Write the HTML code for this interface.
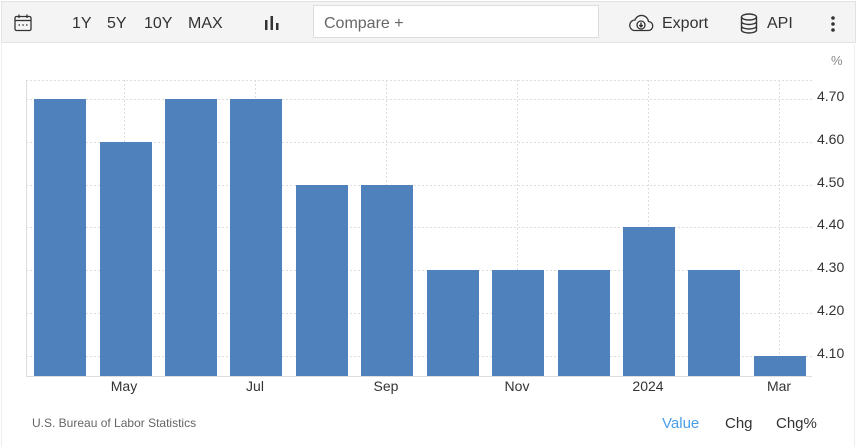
<!DOCTYPE html>
<html><head><meta charset="utf-8"><style>
body{margin:0;width:859px;height:447px;background:#fff;font-family:"Liberation Sans",Arial,sans-serif;position:relative;overflow:hidden}
.tb{position:absolute;left:1px;top:1px;width:853px;height:40px;background:#f4f4f4;border:1px solid #e2e2e2}
.t{position:absolute;font-size:16px;color:#333;top:15px}
.cmp{position:absolute;left:313px;top:5px;width:286px;height:33px;background:#fff;border:1px solid #ddd;box-sizing:border-box;font-size:16px;color:#666;padding:9px 10px}
.side{position:absolute;top:42px;width:1px;height:405px;background:#eee}
</style></head><body>
<div class="tb"></div>
<svg style="position:absolute;left:13px;top:13px" width="20" height="20" viewBox="0 0 20 20" fill="none" stroke="#333" stroke-width="1.3"><rect x="2" y="3.5" width="16" height="14" rx="1.5"/><line x1="2" y1="7.5" x2="18" y2="7.5"/><line x1="6" y1="1.5" x2="6" y2="5"/><line x1="14" y1="1.5" x2="14" y2="5"/><line x1="5.5" y1="12" x2="7" y2="12"/><line x1="9.3" y1="12" x2="10.8" y2="12"/><line x1="13" y1="12" x2="14.5" y2="12"/></svg>
<div class="t" style="left:72px">1Y</div><div class="t" style="left:107px">5Y</div><div class="t" style="left:144px">10Y</div><div class="t" style="left:188px">MAX</div>
<svg style="position:absolute;left:264px;top:15px" width="16" height="16"><rect x="1" y="5" width="2.5" height="10" fill="#333"/><rect x="6.5" y="1" width="2.5" height="14" fill="#333"/><rect x="12" y="8" width="2.5" height="7" fill="#333"/></svg>
<div class="cmp">Compare +</div>
<svg style="position:absolute;left:628px;top:14px" width="26" height="18" viewBox="0 0 26 18" fill="none" stroke="#333" stroke-width="1.3"><path d="M6 16.5H20a4.5 4.5 0 0 0 .5-9A7 7 0 0 0 7 6a5.3 5.3 0 0 0-1 10.5z"/><circle cx="13" cy="11" r="4" fill="#fff"/><path d="M13 8.5v4M11.2 11l1.8 1.8 1.8-1.8" stroke-width="1.5"/></svg>
<div class="t" style="left:662px">Export</div>
<svg style="position:absolute;left:740px;top:13px" width="18" height="21" viewBox="0 0 18 21" fill="none" stroke="#333" stroke-width="1.4"><ellipse cx="9" cy="4" rx="7.5" ry="3"/><path d="M1.5 4v13c0 1.7 3.4 3 7.5 3s7.5-1.3 7.5-3V4M1.5 8.5c0 1.7 3.4 3 7.5 3s7.5-1.3 7.5-3M1.5 13c0 1.7 3.4 3 7.5 3s7.5-1.3 7.5-3"/></svg>
<div class="t" style="left:767px">API</div>
<svg style="position:absolute;left:830px;top:15px" width="6" height="18"><circle cx="3" cy="3" r="1.8" fill="#333"/><circle cx="3" cy="9" r="1.8" fill="#333"/><circle cx="3" cy="15" r="1.8" fill="#333"/></svg>
<div class="side" style="left:1px"></div><div class="side" style="left:854px"></div>
<svg style="position:absolute;left:0;top:0" width="859" height="447">
<g stroke="#ddd" stroke-dasharray="2,2" stroke-width="1">
<line x1="26" y1="80.5" x2="812" y2="80.5"/><line x1="26" y1="99.5" x2="812" y2="99.5"/><line x1="26" y1="142.5" x2="812" y2="142.5"/><line x1="26" y1="185.5" x2="812" y2="185.5"/><line x1="26" y1="227.5" x2="812" y2="227.5"/><line x1="26" y1="270.5" x2="812" y2="270.5"/><line x1="26" y1="313.5" x2="812" y2="313.5"/><line x1="26" y1="356.5" x2="812" y2="356.5"/>
<line x1="124.5" y1="80" x2="124.5" y2="376"/><line x1="255.5" y1="80" x2="255.5" y2="376"/><line x1="386.5" y1="80" x2="386.5" y2="376"/><line x1="517.5" y1="80" x2="517.5" y2="376"/><line x1="648.5" y1="80" x2="648.5" y2="376"/><line x1="779.5" y1="80" x2="779.5" y2="376"/>
</g>
<line x1="26.5" y1="80" x2="26.5" y2="377" stroke="#ddd"/><line x1="26" y1="376.5" x2="812" y2="376.5" stroke="#ddd"/>
<g fill="#4f81bd">
<rect x="34" y="99" width="52" height="277"/><rect x="100" y="142" width="52" height="234"/><rect x="165" y="99" width="52" height="277"/><rect x="230" y="99" width="52" height="277"/><rect x="296" y="185" width="52" height="191"/><rect x="361" y="185" width="52" height="191"/><rect x="427" y="270" width="52" height="106"/><rect x="492" y="270" width="52" height="106"/><rect x="558" y="270" width="52" height="106"/><rect x="623" y="227" width="52" height="149"/><rect x="688" y="270" width="52" height="106"/><rect x="754" y="356" width="52" height="20"/>
</g>
<g font-size="14" fill="#333" font-family="Liberation Sans,Arial,sans-serif">
<text x="817" y="101">4.70</text><text x="817" y="144">4.60</text><text x="817" y="187">4.50</text><text x="817" y="229">4.40</text><text x="817" y="272">4.30</text><text x="817" y="315">4.20</text><text x="817" y="358">4.10</text>
<g text-anchor="middle"><text x="124" y="391">May</text><text x="255" y="391">Jul</text><text x="386" y="391">Sep</text><text x="517" y="391">Nov</text><text x="648" y="391">2024</text><text x="779" y="391">Mar</text></g>
<text x="831" y="65" fill="#888" font-size="13">%</text>
<text x="32" y="427" fill="#666" font-size="12">U.S. Bureau of Labor Statistics</text>
<text x="662" y="428" fill="#4a9ee8" font-size="15">Value</text><text x="725" y="428" font-size="15">Chg</text><text x="776" y="428" font-size="15">Chg%</text>
</g>
</svg>
</body></html>
